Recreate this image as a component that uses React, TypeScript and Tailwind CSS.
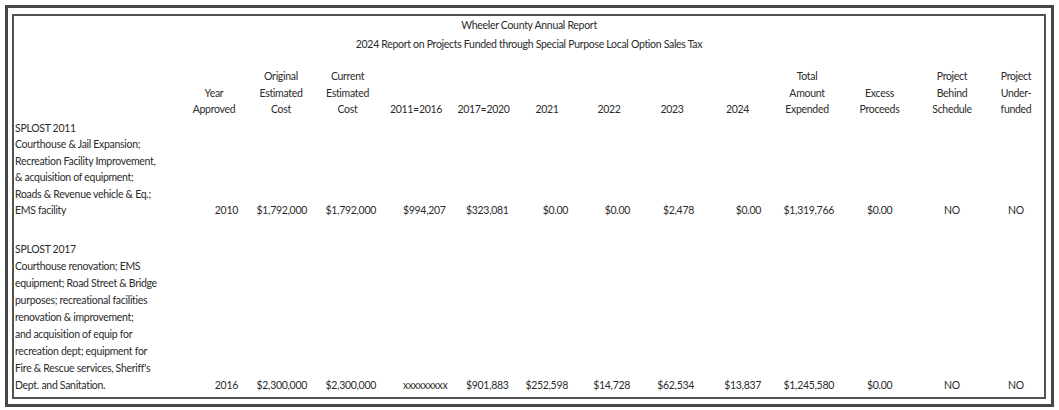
const cols =
  "grid grid-cols-[166px_68px_66px_67px_70px_65px_62px_62px_64px_67px_72px_73px_72px_56px]"

// alignment of the figures in each column, after the description column
const dataAlign = [
  "text-right pr-[10px]",
  "text-right pr-[7px]",
  "text-right pr-[5px]",
  "text-left pl-[22px]",
  "text-left pl-[15px]",
  "text-right pr-[10px]",
  "text-right pr-[10px]",
  "text-right pr-[10px]",
  "text-right pr-[10px]",
  "text-right pr-[9px]",
  "text-left pl-[24px]",
  "text-center",
  "text-center",
]

const headers = [
  ["Year", "Approved"],
  ["Original", "Estimated", "Cost"],
  ["Current", "Estimated", "Cost"],
  ["2011=2016"],
  ["2017=2020"],
  ["2021"],
  ["2022"],
  ["2023"],
  ["2024"],
  ["Total", "Amount", "Expended"],
  ["Excess", "Proceeds"],
  ["Project", "Behind", "Schedule"],
  ["Project", "Under-", "funded"],
]

const projects = [
  {
    rowClass: "mt-[2px] leading-[16.5px]",
    lines: [
      "SPLOST 2011",
      "Courthouse & Jail Expansion;",
      "Recreation Facility Improvement,",
      "& acquisition of equipment;",
      "Roads & Revenue vehicle & Eq.;",
      "EMS facility",
    ],
    values: [
      "2010",
      "$1,792,000",
      "$1,792,000",
      "$994,207",
      "$323,081",
      "$0.00",
      "$0.00",
      "$2,478",
      "$0.00",
      "$1,319,766",
      "$0.00",
      "NO",
      "NO",
    ],
  },
  {
    rowClass: "mt-[22px] leading-[17px]",
    lines: [
      "SPLOST 2017",
      "Courthouse renovation; EMS",
      "equipment; Road Street & Bridge",
      "purposes; recreational facilities",
      "renovation & improvement;",
      "and acquisition of equip for",
      "recreation dept; equipment for",
      "Fire & Rescue services, Sheriff's",
      "Dept. and Sanitation.",
    ],
    values: [
      "2016",
      "$2,300,000",
      "$2,300,000",
      "xxxxxxxxx",
      "$901,883",
      "$252,598",
      "$14,728",
      "$62,534",
      "$13,837",
      "$1,245,580",
      "$0.00",
      "NO",
      "NO",
    ],
  },
]

export default function App() {
  return (
    <div className="w-[1059px] h-[410px] bg-white pt-[5px] pl-[5px] font-['Lato',sans-serif] text-[10.5px] tracking-[-0.3px] text-[#2b2b2b]">
      {/* outer frame */}
      <div className="w-[1049px] h-[402px] border-[3px] border-[#464646] pt-[6px] pl-[4px]">
        {/* inner frame */}
        <div className="w-[1034px] h-[385px] border-2 border-[#525252]">
          {/* Title */}
          <div className="text-center leading-[19px]">
            <div>Wheeler County Annual Report</div>
            <div>2024 Report on Projects Funded through Special Purpose Local Option Sales Tax</div>
          </div>

          {/* Column headers */}
          <div className={`${cols} items-end mt-[14px] leading-[16.5px]`}>
            <div />
            {headers.map((h, i) => (
              <div key={i} className="text-center">
                {h.map((line) => (
                  <div key={line}>{line}</div>
                ))}
              </div>
            ))}
          </div>

          {/* Project rows */}
          {projects.map((p, r) => (
            <div key={r} className={`${cols} items-end ${p.rowClass}`}>
              <div className="pl-px whitespace-nowrap">
                {p.lines.map((line) => (
                  <div key={line}>{line}</div>
                ))}
              </div>
              {p.values.map((v, i) => (
                <div key={i} className={`${dataAlign[i]} whitespace-nowrap`}>
                  {v}
                </div>
              ))}
            </div>
          ))}
        </div>
      </div>
    </div>
  )
}
